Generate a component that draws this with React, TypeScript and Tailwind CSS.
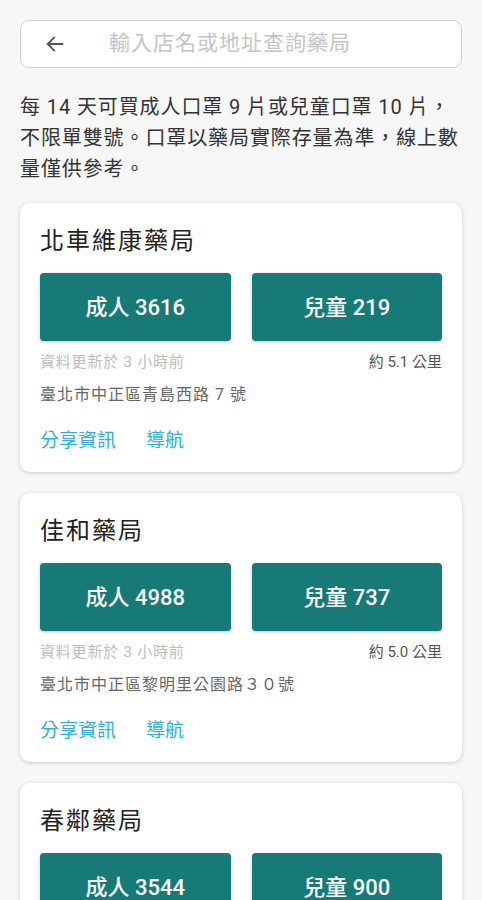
import React from "react";

type Store = {
  name: string;
  adult: number;
  child: number;
  dist: string;
  addr: string;
};

const stores: Store[] = [
  { name: "北車維康藥局", adult: 3616, child: 219, dist: "5.1", addr: "臺北市中正區青島西路 7 號" },
  { name: "佳和藥局", adult: 4988, child: 737, dist: "5.0", addr: "臺北市中正區黎明里公園路３０號" },
  { name: "春鄰藥局", adult: 3544, child: 900, dist: "4.9", addr: "臺北市中正區忠孝西路一段 50 號" },
];

const font = { fontFamily: 'Roboto, "Noto Sans CJK TC", sans-serif' };

function Card({ s }: { s: Store }) {
  return (
    <div className="bg-white rounded-[10px] shadow-[0_1px_4px_rgba(0,0,0,0.18)] px-5 pt-[22px] pb-[19px]">
      <div className="text-[24px] leading-[32px] tracking-[2px] text-[#222]">{s.name}</div>
      <div className="grid grid-cols-2 gap-[21px] mt-[16px]">
        <div className="h-[68px] rounded-[4px] bg-[#177a76] shadow-[0_1px_3px_rgba(0,0,0,0.25)] flex items-center justify-center text-white text-[22px] font-medium">
          成人 {s.adult}
        </div>
        <div className="h-[68px] rounded-[4px] bg-[#177a76] shadow-[0_1px_3px_rgba(0,0,0,0.25)] flex items-center justify-center text-white text-[22px] font-medium">
          兒童 {s.child}
        </div>
      </div>
      <div className="flex justify-between items-center mt-[10px] text-[15px] leading-[22px]">
        <span className="text-[#bdbdbd] tracking-[0.8px]">資料更新於 3 小時前</span>
        <span className="text-[#555]">約 {s.dist} 公里</span>
      </div>
      <div className="mt-[11px] text-[16px] leading-[22px] tracking-[1px] text-[#666]">{s.addr}</div>
      <div className="flex gap-[30px] mt-[23px] text-[19px] leading-[24px] text-[#2eafd6]">
        <span>分享資訊</span>
        <span>導航</span>
      </div>
    </div>
  );
}

export default function App() {
  return (
    <div className="min-h-[900px] bg-[#f7f7f7] px-[20px] pt-[20px] pb-5" style={font}>
      <div className="h-[48px] bg-white border border-[#d0d0d0] rounded-[9px] flex items-center">
        <svg width="22" height="22" viewBox="0 0 24 24" className="ml-[23px]" fill="none" stroke="#555" strokeWidth="2" strokeLinecap="square">
          <path d="M20 12H5M11 5l-7 7 7 7" />
        </svg>
        <span className="ml-[43px] text-[21px] tracking-[1px] text-[#c4c4c4]">輸入店名或地址查詢藥局</span>
      </div>
      <p className="mt-[24px] text-[20px] leading-[31px] tracking-[0.9px] text-[#333]">
        每 14 天可買成人口罩 9 片或兒童口罩 10 片，不限單雙號。口罩以藥局實際存量為準，線上數量僅供參考。
      </p>
      <div className="flex flex-col gap-[21px] mt-[18px]">
        {stores.map((s) => (
          <Card key={s.name} s={s} />
        ))}
      </div>
    </div>
  );
}
